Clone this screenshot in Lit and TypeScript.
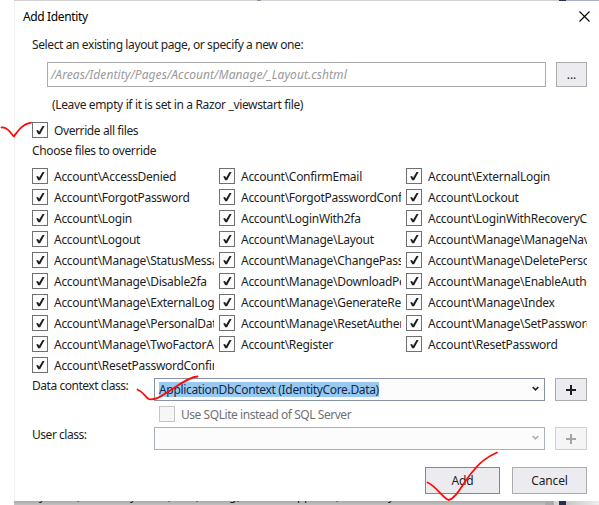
import { LitElement, html, css } from "lit";
import { customElement, property } from "lit/decorators.js";

const FILES = [
  "Account\\AccessDenied", "Account\\ConfirmEmail", "Account\\ExternalLogin",
  "Account\\ForgotPassword", "Account\\ForgotPasswordConfirmation", "Account\\Lockout",
  "Account\\Login", "Account\\LoginWith2fa", "Account\\LoginWithRecoveryCode",
  "Account\\Logout", "Account\\Manage\\Layout", "Account\\Manage\\ManageNav",
  "Account\\Manage\\StatusMessage", "Account\\Manage\\ChangePassword", "Account\\Manage\\DeletePersonalData",
  "Account\\Manage\\Disable2fa", "Account\\Manage\\DownloadPersonalData", "Account\\Manage\\EnableAuthenticator",
  "Account\\Manage\\ExternalLogins", "Account\\Manage\\GenerateRecoveryCodes", "Account\\Manage\\Index",
  "Account\\Manage\\PersonalData", "Account\\Manage\\ResetAuthenticator", "Account\\Manage\\SetPassword",
  "Account\\Manage\\TwoFactorAuthentication", "Account\\Register", "Account\\ResetPassword",
  "Account\\ResetPasswordConfirmation",
];

@customElement("check-item")
export class CheckItem extends LitElement {
  @property() label = "";
  @property({ type: Boolean }) checked = false;
  @property({ type: Boolean }) disabled = false;
  static styles = css`
    :host { display: flex; height: 16px; overflow: hidden; white-space: nowrap; }
    .box { box-sizing: border-box; flex: none; width: 16px; height: 16px; border: 1px solid #707070; background: #fdfdfd; }
    .box svg { display: block; }
    .text { margin-left: 6px; line-height: 17px; height: 16px; overflow: hidden; flex: 1; }
    .box.off { border-color: #c6c6c6; background: #f6f6f6; }
    .dim { color: #717171; }
  `;
  render() {
    return html`<span class="box ${this.disabled ? "off" : ""}">${this.checked
      ? html`<svg width="14" height="14" viewBox="0 0 14 14"><path d="M3.2 7.4 L5 7 L6.1 8.8 L9.5 3 H11.6 L7.1 11.2 H5.2 Z" fill="#1e1e1e" /></svg>`
      : ""}</span><span class="text ${this.disabled ? "dim" : ""}">${this.label}</span>`;
  }
}

const chevron = (c: string) =>
  html`<svg class="chevron" width="7" height="6" viewBox="0 0 7 6"><path d="M0.7 1 L3.5 3.9 L6.3 1" fill="none" stroke=${c} stroke-width="1.6" /></svg>`;
const plus = (c: string) =>
  html`<svg width="10" height="10" viewBox="0 0 10 10"><path d="M0 5 H10 M5 0 V10" stroke=${c} stroke-width="2" /></svg>`;

@customElement("app-root")
export class AppRoot extends LitElement {
  static styles = css`
    :host { display: block; position: relative; width: 599px; height: 505px; overflow: hidden; background: #fff;
      font: 12px/16px "Noto Sans", sans-serif; letter-spacing: -0.36px; color: #1e1e1e; }
    .edge { display: flex; height: 1px; margin-left: 14px; background: #d2d2d2; }
    .edge i { margin-left: 243px; width: 4px; background: #8a8fa6; }
    .edge b { margin-left: 298px; width: 7px; background: #26304f; }
    .edge u { flex: 1; background: #aab1c4; }
    .dialog { box-sizing: border-box; margin-left: 14px; width: 585px; height: 500px; padding: 8px 0 0 17px; border-left: 1px solid #f0f0f0; background: #fff; }
    .title { display: flex; justify-content: space-between; height: 28px; margin-left: -9px; padding-right: 9px; color: #000; }
    .close { margin-top: 2px; }
    .intro { letter-spacing: -0.39px; }
    .path { display: flex; gap: 10px; margin: 9px 0 0 15px; height: 25px; }
    .field { box-sizing: border-box; width: 499px; border: 1px solid #ababab; padding-left: 3px; line-height: 24px; font-style: italic; letter-spacing: 0.08px; color: #999; }
    .btn { box-sizing: border-box; border: 1px solid #acacac; background: #ececf0; display: flex; align-items: center; justify-content: center; }
    .dots { width: 31px; letter-spacing: 0; }
    .hint { margin: 10px 0 0 20px; }
    .all { margin-top: 9px; letter-spacing: -0.4px; }
    .choose { margin-top: 5px; }
    .files { display: grid; grid-template-columns: 182px 182px 181px; column-gap: 5px; row-gap: 5px; margin-top: 9px; letter-spacing: -0.28px; }
    .row { display: flex; height: 23px; margin-top: 5px; }
    .label { width: 122px; letter-spacing: -0.46px; }
    .combo { box-sizing: border-box; width: 391px; border: 1px solid #8792a2; background: #fcfcfc; padding: 2px 5px 2px 4px; display: flex; justify-content: space-between; align-items: center; }
    .combo.off { border-color: #a9b0bb; justify-content: flex-end; }
    .chevron { margin-bottom: 1px; }
    .selected { background: #99c9ef; color: #10294c; line-height: 15px; height: 15px; letter-spacing: -0.33px; }
    .plus { width: 32px; margin-left: 10px; }
    .plus.off { background: #f5f5f5; border-color: #cccedb; }
    .sqlite { margin: 5px 0 0 127px; letter-spacing: -0.45px; }
    .actions { display: flex; justify-content: flex-end; gap: 12px; margin: 17px 12px 0 0; height: 27px; letter-spacing: -0.15px; }
    .actions .btn { width: 75px; }
    .actions .btn.primary { border: 1px solid #3399ff; }
    .under { display: flex; height: 4px; margin-left: 14px; overflow: hidden; background: linear-gradient(#a9a9a9, #c2c2c4); }
    .line { display: grid; grid-template-columns: 38px 53px 38px 28px 33px 8px 60px 39px 52px 20px; width: 506px; height: 16px; margin-top: -13px; padding-left: 25px; }
    .bar { width: 9px; background: #a9a9b0; }
    .gap { width: 5px; background: #d6d6d6; }
    .navy { width: 7px; background: #26304f; }
    .rest { flex: 1; background: linear-gradient(90deg, #c8c8c8, #eee); }
    .ink { position: absolute; left: 0; top: 0; pointer-events: none; }
  `;
  render() {
    return html`<div class="edge"><i></i><b></b><u></u></div>
    <div class="dialog">
      <div class="title"><span>Add Identity</span>
        <svg class="close" width="11" height="11" viewBox="0 0 11 11"><path d="M0.5 0.5 L10.5 10.5 M10.5 0.5 L0.5 10.5" stroke="#000" stroke-width="1.1" /></svg></div>
      <div class="intro">Select an existing layout page, or specify a new one:</div>
      <div class="path"><div class="field">/Areas/Identity/Pages/Account/Manage/_Layout.cshtml</div><div class="btn dots">...</div></div>
      <div class="hint">(Leave empty if it is set in a Razor _viewstart file)</div>
      <check-item class="all" label="Override all files" checked></check-item>
      <div class="choose">Choose files to override</div>
      <div class="files">${FILES.map((f) => html`<check-item .label=${f} checked></check-item>`)}</div>
      <div class="row"><span class="label">Data context class:</span><div class="combo"><span class="selected">ApplicationDbContext (IdentityCore.Data)</span>${chevron("#1e1e1e")}</div><div class="btn plus">${plus("#1e1e1e")}</div></div>
      <check-item class="sqlite" label="Use SQLite instead of SQL Server" disabled></check-item>
      <div class="row"><span class="label">User class:</span><div class="combo off">${chevron("#a9b0bb")}</div><div class="btn plus off">${plus("#a2a4a5")}</div></div>
      <div class="actions"><div class="btn primary">Add</div><div class="btn">Cancel</div></div>
    </div>
    <div class="under"><div class="line">${["y", ",", "y", ",", ",", "g", ",", "pp", ",", "y"].map((c) => html`<span>${c}</span>`)}</div><div class="bar"></div><div class="gap"></div><div class="navy"></div><div class="rest"></div></div>
    <svg class="ink" width="599" height="505" viewBox="0 0 599 505" fill="none" stroke="#ff0808" stroke-width="1.8" stroke-linecap="round" stroke-linejoin="round">
      <path d="M1.5 127.5 C7 127 10 132 13.8 136.5 C18 131 22 124 31 122.7" />
      <path d="M137.5 389.5 C143 392 145 396 148.5 399 C153 400.5 159 398 166 393 C176 387 188 377 197.5 376.5" />
      <path d="M427.5 482.5 C436 486 443 498 448.5 500 C457 498 463 482 474 470 C480 462 489 456 497 452.5" />
    </svg>`;
  }
}
